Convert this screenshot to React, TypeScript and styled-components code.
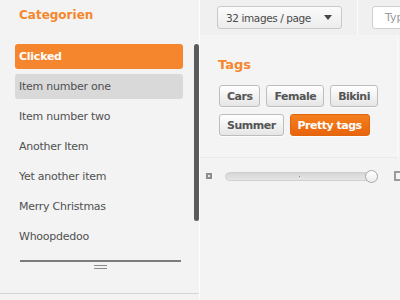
import React from "react";
import styled, { createGlobalStyle } from "styled-components";

const Global = createGlobalStyle`
  html, body { margin: 0; padding: 0; }
  body { font-family: "DejaVu Sans", Verdana, sans-serif; background: #f3f3f3; }
`;

const Page = styled.div`
  display: flex;
  width: 400px;
  height: 300px;
  overflow: hidden;
  background: #f3f3f3;
`;

const Sidebar = styled.aside`
  width: 199px;
  flex: none;
  border-right: 1px solid #fdfdfd;
  display: flex;
  flex-direction: column;
  background: #f3f3f3;
`;

const SideTitle = styled.h2`
  margin: 0;
  height: 44px;
  box-sizing: border-box;
  padding: 8px 0 0 19px;
  font-size: 12px;
  line-height: 14px;
  font-weight: bold;
  color: #f5872d;
`;

const SideBody = styled.div`
  display: flex;
  height: 206px;
`;

const List = styled.ul`
  list-style: none;
  margin: 0 0 0 15px;
  padding: 0;
  width: 169px;
  display: flex;
  flex-direction: column;
  gap: 5px;
`;

const Item = styled.li<{ $state?: "active" | "hover" }>`
  height: 25px;
  box-sizing: border-box;
  padding-left: 4px;
  display: flex;
  align-items: center;
  border-radius: 3px;
  font-size: 11px;
  letter-spacing: -0.25px;
  color: ${(p) => (p.$state === "active" ? "#ffffff" : "#505050")};
  font-weight: ${(p) => (p.$state === "active" ? "bold" : "normal")};
  background: ${(p) =>
    p.$state === "active" ? "#f6862e" : p.$state === "hover" ? "#d9d9d9" : "transparent"};
`;

const Scrollbar = styled.div`
  margin-left: 11px;
  width: 5px;
  height: 177px;
  border-radius: 3px;
  background: #5b5b5b;
`;

const SideFooter = styled.div`
  display: flex;
  flex-direction: column;
  align-items: center;
  padding-top: 10px;
  height: 44px;
  box-sizing: border-box;
  border-bottom: 1px solid #d5d5d5;
`;

const Rule = styled.div`
  width: 161px;
  height: 2px;
  background: #7b7b7b;
  margin-left: 2px;
`;

const Grip = styled.div`
  margin-top: 3px;
  margin-left: 2px;
  width: 13px;
  height: 2px;
  border-top: 1px solid #8a8a8a;
  border-bottom: 1px solid #8a8a8a;
`;

const Main = styled.main`
  flex: 1;
  display: flex;
  flex-direction: column;
  min-width: 0;
`;

const Toolbar = styled.div`
  display: flex;
  height: 35px;
  flex: none;
  background: #f0f0f0;
`;

const ToolSection = styled.div<{ $left: number; $right: number }>`
  display: flex;
  align-items: flex-start;
  padding: 6px ${(p) => p.$right}px 0 ${(p) => p.$left}px;
`;

const Separator = styled.div`
  width: 1px;
  background: #e0e0e0;
  border-right: 1px solid #fbfbfb;
`;

const Select = styled.div`
  width: 125px;
  height: 23px;
  box-sizing: border-box;
  border: 1px solid #c9c9c9;
  border-radius: 3px;
  background: linear-gradient(#fbfbfb, #ececec);
  display: flex;
  align-items: center;
  padding: 0 9px 0 8px;
  font-size: 10.5px;
  letter-spacing: -0.4px;
  color: #4a4a4a;
`;

const Caret = styled.span`
  margin-left: auto;
  width: 0;
  height: 0;
  border-left: 4px solid transparent;
  border-right: 4px solid transparent;
  border-top: 5px solid #444;
`;

const Input = styled.div`
  width: 60px;
  height: 23px;
  box-sizing: border-box;
  border: 1px solid #cfcfcf;
  border-radius: 3px;
  background: #ffffff;
  font-size: 11px;
  color: #9a9a9a;
  padding-left: 12px;
  display: flex;
  align-items: center;
  flex: none;
`;

const Panel = styled.section`
  width: 198px;
  height: 123px;
  box-sizing: border-box;
  padding: 21px 0 0 19px;
  background: #f4f4f4;
  border-right: 1px solid #fbfbfb;
  border-bottom: 1px solid #e9e9e9;
`;

const PanelTitle = styled.h3`
  margin: 0 0 12px -1px;
  font-size: 13px;
  line-height: 17px;
  font-weight: bold;
  color: #f5872d;
`;

const Tags = styled.div`
  display: flex;
  flex-wrap: wrap;
  gap: 7px 6px;
  width: 172px;
`;

const Tag = styled.span<{ $on?: boolean }>`
  height: 22px;
  box-sizing: border-box;
  padding: 0 7px;
  display: inline-flex;
  align-items: center;
  border-radius: 3px;
  font-size: 11px;
  font-weight: bold;
  letter-spacing: -0.5px;
  border: 1px solid ${(p) => (p.$on ? "#e0650f" : "#bdbdbd")};
  color: ${(p) => (p.$on ? "#ffffff" : "#555555")};
  background: ${(p) =>
    p.$on ? "linear-gradient(#f5801f, #e8640d)" : "linear-gradient(#ffffff, #e6e6e6)"};
  box-shadow: 0 1px 0 rgba(255, 255, 255, 0.8);
`;

const SliderRow = styled.div`
  display: flex;
  align-items: center;
  padding: 13px 0 0 6px;
`;

const SmallSquare = styled.span`
  width: 6px;
  height: 6px;
  box-sizing: border-box;
  border: 2px solid #8c8c8c;
  background: #eaeaea;
  flex: none;
`;

const BigSquare = styled.span`
  width: 10px;
  height: 10px;
  box-sizing: border-box;
  border: 2px solid #9a9a9a;
  background: #f4f4f4;
  margin-left: 16px;
  flex: none;
`;

const Track = styled.div`
  position: relative;
  margin-left: 13px;
  width: 153px;
  height: 9px;
  box-sizing: border-box;
  border: 1px solid #d0d0d0;
  border-radius: 5px;
  background: linear-gradient(#d6d6d6, #e6e6e6);
  flex: none;
`;

const Dot = styled.span`
  position: absolute;
  left: 73px;
  top: 3px;
  width: 1px;
  height: 1px;
  background: #888;
`;

const Knob = styled.span`
  position: absolute;
  left: 139px;
  top: -3px;
  width: 13px;
  height: 13px;
  box-sizing: border-box;
  border-radius: 50%;
  border: 1px solid #a8a8a8;
  background: linear-gradient(#ffffff, #ececec);
`;

const items = [
  "Item number two",
  "Another Item",
  "Yet another item",
  "Merry Christmas",
  "Whoopdedoo",
];

export default function App() {
  return (
    <>
      <Global />
      <Page>
        <Sidebar>
          <SideTitle>Categorien</SideTitle>
          <SideBody>
            <List>
              <Item $state="active">Clicked</Item>
              <Item $state="hover">Item number one</Item>
              {items.map((t) => (
                <Item key={t}>{t}</Item>
              ))}
            </List>
            <Scrollbar />
          </SideBody>
          <SideFooter>
            <Rule />
            <Grip />
          </SideFooter>
        </Sidebar>
        <Main>
          <Toolbar>
            <ToolSection $left={17} $right={15}>
              <Select>
                <span>32 images / page</span>
                <Caret />
              </Select>
            </ToolSection>
            <Separator />
            <ToolSection $left={14} $right={0}>
              <Input>Type</Input>
            </ToolSection>
          </Toolbar>
          <Panel>
            <PanelTitle>Tags</PanelTitle>
            <Tags>
              <Tag>Cars</Tag>
              <Tag>Female</Tag>
              <Tag>Bikini</Tag>
              <Tag>Summer</Tag>
              <Tag $on>Pretty tags</Tag>
            </Tags>
          </Panel>
          <SliderRow>
            <SmallSquare />
            <Track>
              <Dot />
              <Knob />
            </Track>
            <BigSquare />
          </SliderRow>
        </Main>
      </Page>
    </>
  );
}
